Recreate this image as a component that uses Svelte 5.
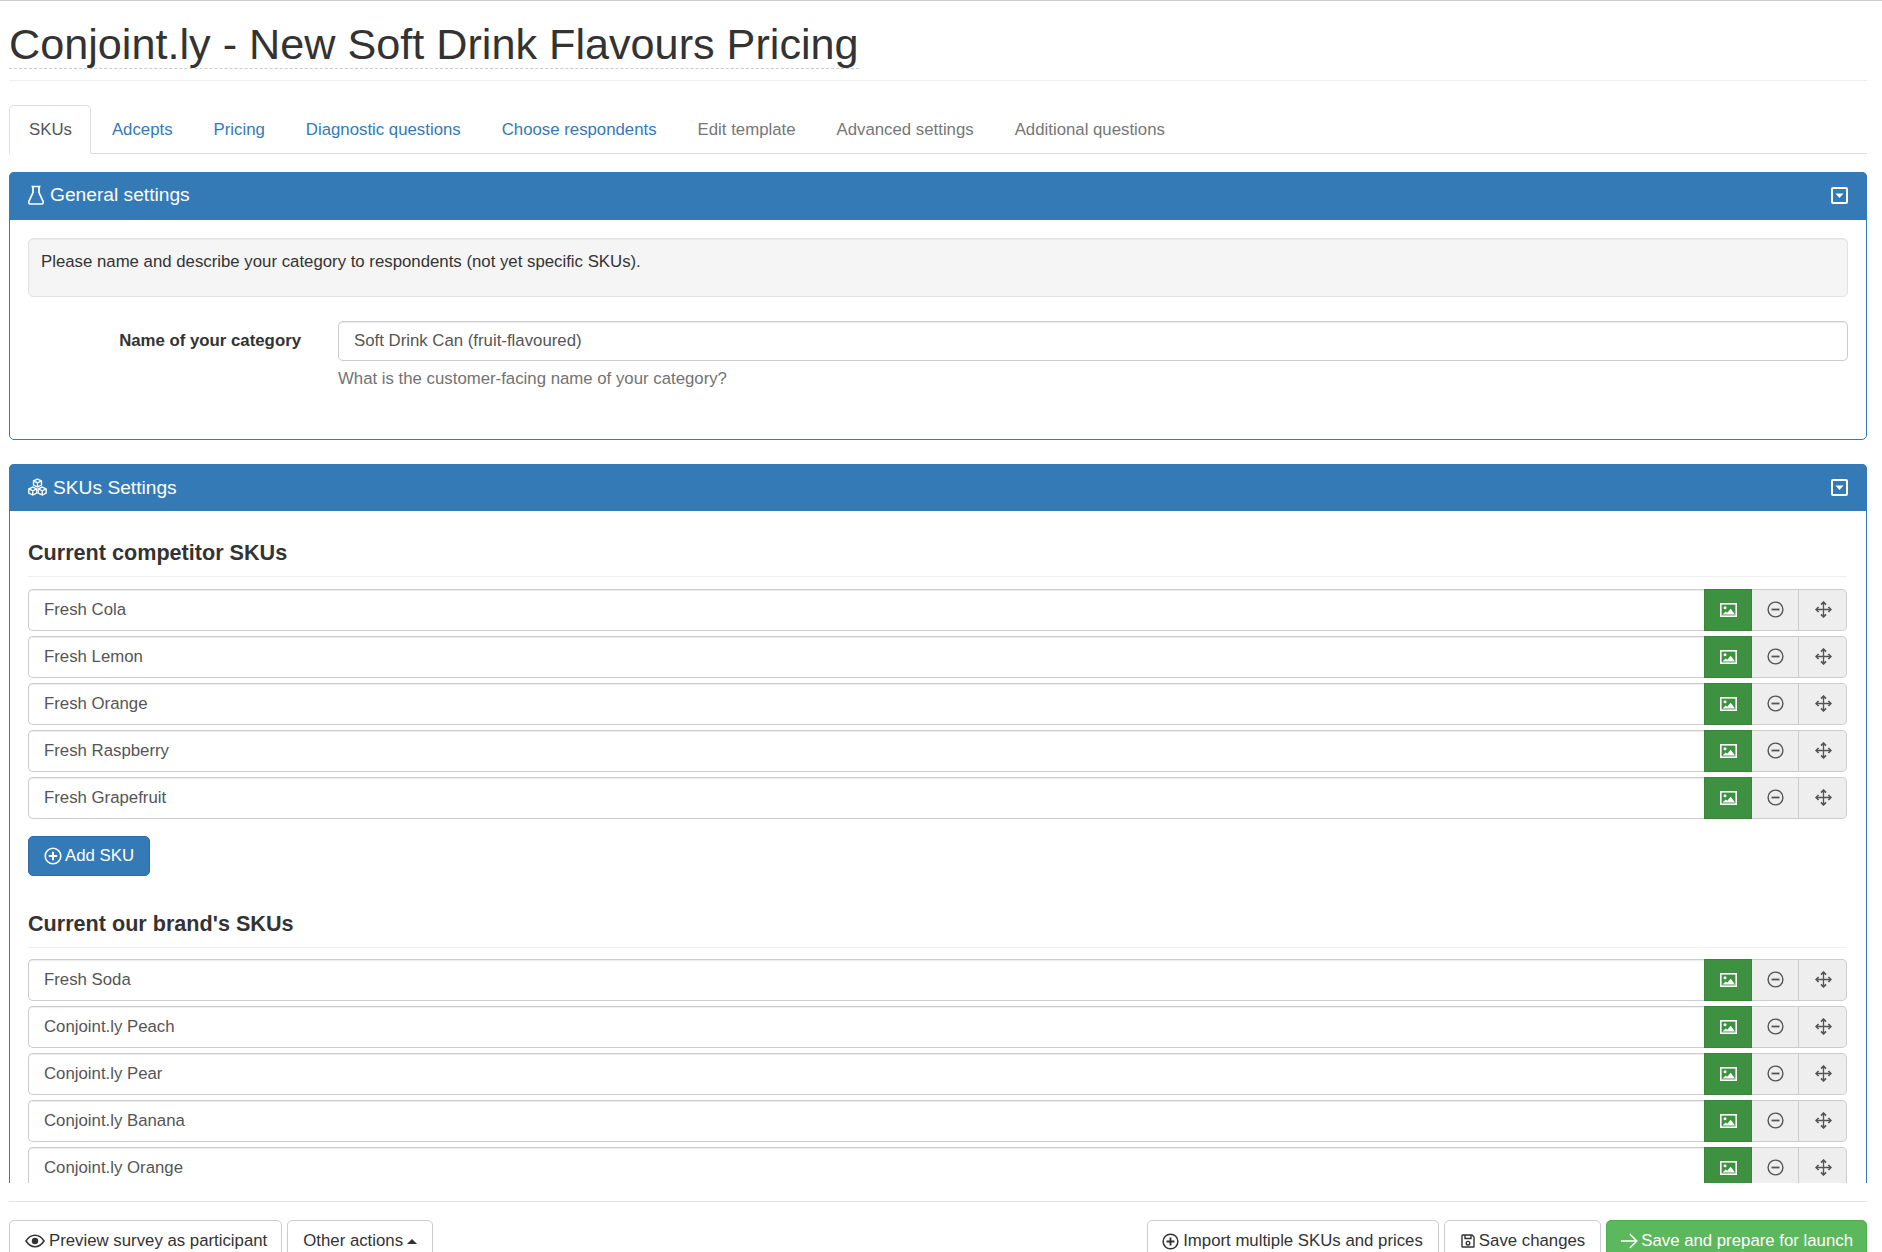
<script lang="ts">
	const tabs = [
		{ label: 'SKUs', kind: 'active' },
		{ label: 'Adcepts', kind: 'link' },
		{ label: 'Pricing', kind: 'link' },
		{ label: 'Diagnostic questions', kind: 'link' },
		{ label: 'Choose respondents', kind: 'link' },
		{ label: 'Edit template', kind: 'muted' },
		{ label: 'Advanced settings', kind: 'muted' },
		{ label: 'Additional questions', kind: 'muted' }
	];
	const competitors = ['Fresh Cola', 'Fresh Lemon', 'Fresh Orange', 'Fresh Raspberry', 'Fresh Grapefruit'];
	const own = ['Fresh Soda', 'Conjoint.ly Peach', 'Conjoint.ly Pear', 'Conjoint.ly Banana', 'Conjoint.ly Orange'];
</script>

{#snippet collapseIcon()}
	<svg class="collapse" width="17" height="17" viewBox="0 0 17 17">
		<rect x="1" y="1" width="15" height="15" rx="1" fill="none" stroke="#fff" stroke-width="2" />
		<path d="M4.500 6.500h8l-4 4.500z" fill="#fff" />
	</svg>
{/snippet}

{#snippet plusIcon(size: number)}
	<svg width={size} height={size} viewBox="0 0 18 18" fill="none" stroke="currentColor">
		<circle cx="9" cy="9" r="7.800" stroke-width="1.600" />
		<path d="M9 4.800v8.400M4.800 9h8.400" stroke-width="2" />
	</svg>
{/snippet}

{#snippet skuRow(name: string)}
	<div class="sku-row">
		<input class="sku-input" type="text" value={name} readonly />
		<button class="addon image" aria-label="Image">
			<svg width="17" height="14" viewBox="0 0 17 14">
				<rect x="0.800" y="0.800" width="15.400" height="12.400" fill="none" stroke="#fff" stroke-width="1.600" />
				<circle cx="5" cy="4.800" r="1.500" fill="#fff" />
				<path d="M2.500 11.500l3.200-3 1.500 1.200 3.500-4 4.300 5.800z" fill="#fff" />
			</svg>
		</button>
		<button class="addon" aria-label="Remove">
			<svg width="17" height="17" viewBox="0 0 17 17" fill="none" stroke="#555" stroke-width="1.400">
				<circle cx="8.500" cy="8.500" r="7.400" />
				<path d="M4.500 8.500h8" stroke-width="1.800" />
			</svg>
		</button>
		<button class="addon" aria-label="Move">
			<svg width="17" height="17" viewBox="0 0 17 17" fill="none" stroke="#555" stroke-width="1.300">
				<path d="M8.500 2v13M2 8.500h13" />
				<path d="M6 3.600 8.500 1.100l2.500 2.500M6 13.400l2.500 2.500 2.500-2.500M3.600 6 1.100 8.500 3.600 11M13.400 6l2.500 2.500-2.500 2.500" stroke-width="1.700" />
			</svg>
		</button>
	</div>
{/snippet}

<div class="page">
	<div class="top">
		<div class="title-row">
			<h1><span class="title">Conjoint.ly - New Soft Drink Flavours Pricing</span></h1>
		</div>
		<ul class="tabs">
			{#each tabs as tab}
				<li class="tab {tab.kind}">{tab.label}</li>
			{/each}
		</ul>
	</div>

	<div class="content">
		<section class="panel first">
			<header class="panel-head">
				<span class="head-title">
					<svg width="18" height="20" viewBox="0 0 18 20" fill="none" stroke="#fff" stroke-width="1.700">
						<path d="M4.500 1.500h9M6 1.500v6L1.900 16.400c-.6 1.100.1 2.600 1.400 2.600h11.400c1.300 0 2-1.500 1.400-2.600L12 7.500v-6" />
					</svg>
					General settings
				</span>
				{@render collapseIcon()}
			</header>
			<div class="panel-body">
				<div class="well">Please name and describe your category to respondents (not yet specific SKUs).</div>
				<div class="form-row">
					<label class="form-label" for="category">Name of your category</label>
					<div class="form-field">
						<input id="category" class="text-input" type="text" value="Soft Drink Can (fruit-flavoured)" readonly />
						<p class="help">What is the customer-facing name of your category?</p>
					</div>
				</div>
			</div>
		</section>

		<section class="panel">
			<header class="panel-head">
				<span class="head-title">
					<svg width="21" height="19" viewBox="0 0 20 18" fill="none" stroke="#fff" stroke-width="1.300">
						<path d="M10 1l3.800 1.800v4L10 8.600 6.200 6.800v-4zM6.200 2.800 10 4.600l3.800-1.800M10 4.600v4" />
						<path d="M5.500 8.600l3.800 1.800v4l-3.800 1.800-3.800-1.800v-4zM1.700 10.400l3.800 1.800 3.800-1.800M5.500 12.200v4" />
						<path d="M14.500 8.600l3.800 1.800v4l-3.800 1.800-3.800-1.800v-4zM10.700 10.400l3.800 1.800 3.800-1.800M14.500 12.200v4" />
					</svg>
					SKUs Settings
				</span>
				{@render collapseIcon()}
			</header>
			<div class="panel-body skus">
				<h3>Current competitor SKUs</h3>
				{#each competitors as name}
					{@render skuRow(name)}
				{/each}
				<button class="btn primary add">{@render plusIcon(18)} Add SKU</button>
				<h3 class="second">Current our brand's SKUs</h3>
				{#each own as name}
					{@render skuRow(name)}
				{/each}
			</div>
		</section>
	</div>

	<footer class="actions">
		<div class="group">
			<button class="btn preview">
				<svg width="20" height="14" viewBox="0 0 20 14" fill="none" stroke="#333">
					<path d="M1 7c2.400-3.800 5.500-5.700 9-5.700S16.600 3.200 19 7c-2.400 3.800-5.500 5.700-9 5.700S3.400 10.800 1 7z" stroke-width="1.500" />
					<circle cx="10" cy="7" r="3.200" fill="#333" stroke="none" />
				</svg>
				Preview survey as participant
			</button>
			<button class="btn">Other actions <span class="caret"></span></button>
		</div>
		<div class="group">
			<button class="btn import">{@render plusIcon(17)} Import multiple SKUs and prices</button>
			<button class="btn save">
				<svg width="14" height="14" viewBox="0 0 14 14" fill="none" stroke="#333" stroke-width="1.400">
					<path d="M1 1.500a.5.500 0 0 1 .5-.5H11l2 2v9.500a.5.500 0 0 1-.5.500h-11a.5.500 0 0 1-.5-.5z" />
					<path d="M4 1v3.500h6V1" />
					<circle cx="7" cy="9.200" r="1.800" />
				</svg>
				Save changes
			</button>
			<button class="btn success">
				<svg width="17" height="16" viewBox="0 0 17 16" fill="none" stroke="#fff" stroke-width="1.400">
					<path d="M0 8h15.500M8.800 1l7 7-7 7" />
				</svg>
				Save and prepare for launch
			</button>
		</div>
	</footer>
</div>

<style>
	:global(body) {
		margin: 0;
		overflow: hidden;
		background: #fff;
	}

	.page {
		height: 1252px;
		box-sizing: border-box;
		display: flex;
		flex-direction: column;
		padding: 0 15px 0 9px;
		border-top: 1px solid #ccc;
		overflow: hidden;
		font-family: 'Liberation Sans', Arial, sans-serif;
		font-size: 16.8px;
		line-height: 1.43;
		color: #333;
	}

	.title-row {
		padding-bottom: 11px;
		border-bottom: 1px solid #eee;
	}

	h1 {
		margin: 0;
		padding-top: 20px;
		font-size: 43.2px;
		font-weight: 500;
		line-height: 47px;
	}

	.title {
		display: inline-block;
		border-bottom: 1px dashed #ccc;
	}

	.tabs {
		display: flex;
		list-style: none;
		margin: 24px 0 0;
		padding: 0;
		border-bottom: 1px solid #ddd;
		height: 48px;
	}

	.tab {
		box-sizing: border-box;
		height: 49px;
		padding: 12px 19px;
		margin-right: 1px;
		border: 1px solid transparent;
		border-radius: 5px 5px 0 0;
	}

	.tab.active {
		padding-right: 18px;
		color: #555;
		border-color: #ddd #ddd #fff;
		background: #fff;
	}

	.tab.link {
		color: #337ab7;
	}

	.tab.muted {
		color: #777;
	}

	.content {
		flex: 1;
		min-height: 0;
		overflow: hidden;
		padding-top: 18px;
	}

	.panel {
		border: 1px solid #337ab7;
		border-radius: 5px;
		background: #fff;
		margin-bottom: 24px;
	}

	.panel-head {
		box-sizing: border-box;
		height: 47px;
		display: flex;
		align-items: center;
		justify-content: space-between;
		padding: 0 19px 0 18px;
		background: #337ab7;
		color: #fff;
		font-size: 19.2px;
		margin: -1px -1px 0;
		border-radius: 5px 5px 0 0;
	}

	.first .panel-head {
		height: 48px;
		padding-bottom: 2px;
	}

	.head-title {
		display: flex;
		align-items: center;
		gap: 5px;
	}

	.collapse {
		flex-shrink: 0;
	}

	.panel-body {
		padding: 18px;
	}

	.well {
		min-height: 19px;
		padding: 11px 12px;
		height: 35px;
		background: #f5f5f5;
		border: 1px solid #e3e3e3;
		border-radius: 5px;
		box-shadow: inset 0 1px 1px rgba(0, 0, 0, 0.05);
	}

	.form-row {
		display: grid;
		grid-template-columns: 274px 1fr;
		column-gap: 36px;
		margin-top: 24px;
	}

	.form-label {
		font-weight: 700;
		text-align: right;
		padding: 8px 1px 0 0;
	}

	.text-input {
		display: block;
		box-sizing: border-box;
		width: 100%;
		height: 40px;
		padding: 0 15px;
		border: 1px solid #ccc;
		border-radius: 5px;
		font: inherit;
		color: #555;
		box-shadow: inset 0 1px 1px rgba(0, 0, 0, 0.075);
		outline: none;
	}

	.help {
		margin: 6px 0 0;
		color: #737373;
		height: 54px;
	}

	.skus {
		padding: 29px 19px 0 18px;
	}

	h3 {
		margin: 0 0 12px;
		padding-bottom: 10px;
		border-bottom: 1px solid #eee;
		font-size: 21.6px;
		font-weight: 700;
		line-height: 1.2;
		color: #333;
	}

	h3.second {
		margin: 35px 0 11px;
	}

	.sku-row {
		display: flex;
		height: 42px;
		margin-bottom: 5px;
	}

	.sku-input {
		flex: 1;
		min-width: 0;
		box-sizing: border-box;
		height: 42px;
		padding: 0 15px;
		border: 1px solid #ccc;
		border-right: 0;
		border-radius: 5px 0 0 5px;
		font: inherit;
		color: #555;
		box-shadow: inset 0 1px 1px rgba(0, 0, 0, 0.075);
		outline: none;
	}

	.addon {
		box-sizing: border-box;
		width: 47px;
		height: 42px;
		display: flex;
		align-items: center;
		justify-content: center;
		padding: 0 0 0 1px;
		background: #eee;
		border: 1px solid #ccc;
		border-left: 0;
	}

	.addon:last-child {
		width: 48px;
		border-radius: 0 5px 5px 0;
	}

	.addon.image {
		width: 48px;
		padding: 0;
		background: #3f9142;
		border: 1px solid #398439;
	}

	.btn {
		box-sizing: border-box;
		display: inline-flex;
		align-items: center;
		gap: 4px;
		height: 40px;
		padding: 0 15px;
		background: #fff;
		border: 1px solid #ccc;
		border-radius: 5px;
		font: inherit;
		color: #333;
	}

	.btn.primary {
		background: #337ab7;
		border-color: #2e6da4;
		color: #fff;
	}

	.btn.success {
		padding: 0 13px 0 14px;
		gap: 3px;
		background: #5cb85c;
		border-color: #4cae4c;
		color: #fff;
	}

	.btn.save {
		padding: 0 15px 0 16px;
	}

	.btn.preview {
		padding-right: 14px;
	}

	.btn.import {
		padding-left: 14px;
	}

	.add {
		margin-top: 12px;
		gap: 3px;
	}

	.actions {
		box-sizing: border-box;
		flex-shrink: 0;
		height: 51px;
		margin-top: 18px;
		padding-top: 18px;
		border-top: 1px solid #e5e5e5;
		display: flex;
		justify-content: space-between;
	}

	.actions .btn {
		height: 42px;
	}

	.group {
		display: flex;
		gap: 5px;
		align-items: flex-start;
	}

	.caret {
		width: 0;
		height: 0;
		border-left: 5px solid transparent;
		border-right: 5px solid transparent;
		border-bottom: 5px solid #333;
	}
</style>
